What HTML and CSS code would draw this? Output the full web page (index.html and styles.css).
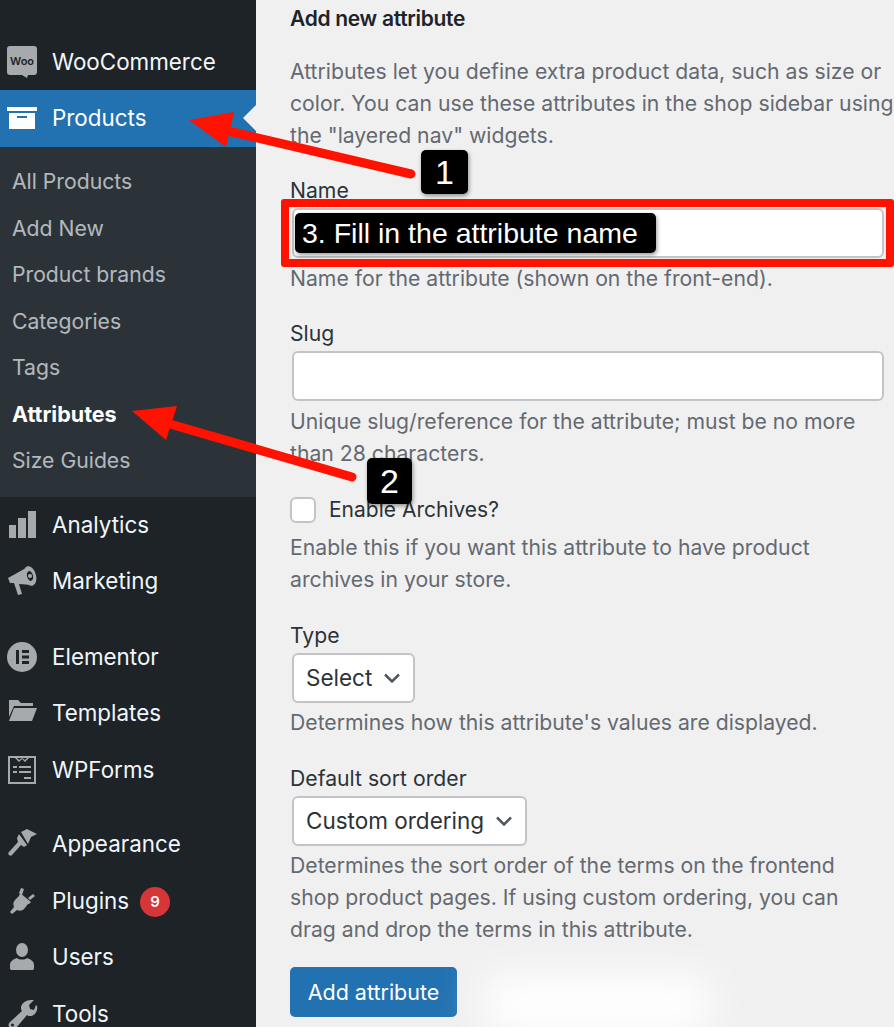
FILE: index.html
```html
<!DOCTYPE html>
<html lang="en">

<head>
    <meta charset="UTF-8">
    <meta name="viewport" content="width=device-width, initial-scale=1.0">
    <title>Add new attribute</title>
    <link rel="stylesheet" href="styles.css">
</head>

<body>
    <aside class="sidebar">
        <ul class="menu">
            <li class="menu-item">
                <svg class="icon" viewBox="0 0 32 32"><path d="M4 0h24a3 3 0 0 1 3 3v23a3 3 0 0 1-3 3h-6l-1 3-5-3H4a3 3 0 0 1-3-3V3a3 3 0 0 1 3-3z"/><text x="16" y="19" class="woo-text" text-anchor="middle">Woo</text></svg>
                <span>WooCommerce</span>
            </li>
            <li class="menu-item active">
                <svg class="icon" viewBox="0 0 32 32"><rect x="1" y="5" width="30" height="4"/><path d="M3 11h26v16H3z"/><rect class="slit" x="11" y="14" width="10" height="2"/></svg>
                <span>Products</span>
            </li>
        </ul>
        <ul class="submenu">
            <li>All Products</li>
            <li>Add New</li>
            <li>Product brands</li>
            <li>Categories</li>
            <li>Tags</li>
            <li class="current">Attributes</li>
            <li>Size Guides</li>
        </ul>
        <ul class="menu">
            <li class="menu-item">
                <svg class="icon" viewBox="0 0 32 32"><rect x="3" y="16" width="7" height="13"/><rect x="12" y="9" width="8" height="20"/><rect x="22" y="2" width="8" height="27"/></svg>
                <span>Analytics</span>
            </li>
            <li class="menu-item">
                <svg class="icon" viewBox="0 0 32 32"><path d="M2 13L20 3l6 17-13-1 3 10-4 1-4-12H4z"/><ellipse cx="24" cy="11" rx="6" ry="10" transform="rotate(-15 24 11)"/><ellipse class="dark" cx="24" cy="11" rx="3" ry="5" transform="rotate(-15 24 11)"/><circle cx="24" cy="11" r="2"/></svg>
                <span>Marketing</span>
            </li>
        </ul>
        <ul class="menu group">
            <li class="menu-item">
                <svg class="icon" viewBox="0 0 32 32"><circle cx="16" cy="16" r="15"/><rect class="dark" x="10" y="9" width="3" height="14"/><rect class="dark" x="16" y="9" width="7" height="3"/><rect class="dark" x="16" y="14.5" width="7" height="3"/><rect class="dark" x="16" y="20" width="7" height="3"/></svg>
                <span>Elementor</span>
            </li>
            <li class="menu-item">
                <svg class="icon" viewBox="0 0 32 32"><path d="M3 3h9l3 3h12v3H8L3 20z"/><path d="M8 11h23l-5 13H3z"/></svg>
                <span>Templates</span>
            </li>
            <li class="menu-item">
                <svg class="icon" viewBox="0 0 32 32"><path fill-rule="evenodd" d="M2 2h28v28H2zM4 4v24h24V4z"/><path d="M9 4l4 4 3-3 3 3 4-4h-2l-2 2-3-2-3 2-2-2z"/><rect x="7" y="12" width="4" height="2"/><rect x="13" y="12" width="12" height="2"/><rect x="7" y="17" width="4" height="2"/><rect x="13" y="17" width="12" height="2"/><rect x="18" y="23" width="7" height="2"/></svg>
                <span>WPForms</span>
            </li>
        </ul>
        <ul class="menu group">
            <li class="menu-item">
                <svg class="icon" viewBox="0 0 32 32"><path d="M15 4l6-3 10 5-6 3-3 7z"/><path d="M13 6l8 11-3 2-3-2-9 10c-2 2-5-1-3-3l9-10-1-4z"/></svg>
                <span>Appearance</span>
            </li>
            <li class="menu-item">
                <svg class="icon" viewBox="0 0 32 32"><path d="M14 8l11 9-2 2-1 0-4 5c-2 2-5 2-7 1l-5 4-2-2 4-5c-1-2-1-5 1-7l4-4z"/><path d="M15 3l3 1-2 6-3-2z"/><path d="M27 9l2 2-5 4-2-2z"/></svg>
                <span>Plugins</span>
                <span class="count">9</span>
            </li>
            <li class="menu-item">
                <svg class="icon" viewBox="0 0 32 32"><ellipse cx="16" cy="9" rx="6" ry="7"/><path d="M4 24c0-4 4-6 7-7 2 2 8 2 10 0 3 1 7 3 7 7v3c0 2-1 2-3 2H7c-2 0-3 0-3-2z"/></svg>
                <span>Users</span>
            </li>
            <li class="menu-item">
                <svg class="icon" viewBox="0 0 32 32"><path d="M28 2l-5 5 1 4 4 1 2-5 0 0 1 1c1 5-2 9-6 10-2 0-3 0-4-1L10 30c-2 2-4 2-6 0s-2-4 0-6l12-11c-1-1-1-3-1-4 1-4 5-7 10-7z"/><circle class="dark" cx="6.500" cy="27" r="1.500"/></svg>
                <span>Tools</span>
            </li>
        </ul>
    </aside>

    <main class="content">
        <h2 class="title">Add new attribute</h2>
        <p class="intro">Attributes let you define extra product data, such as size or color. You can use these attributes in the shop sidebar using the "layered nav" widgets.</p>

        <div class="field field-name">
            <label for="attr-name">Name</label>
            <div class="name-wrap">
                <input type="text" id="attr-name">
                <div class="red-box"></div>
                <div class="callout">3. Fill in the attribute name</div>
            </div>
            <p class="desc">Name for the attribute (shown on the front-end).</p>
        </div>

        <div class="field">
            <label for="attr-slug">Slug</label>
            <input type="text" id="attr-slug">
            <p class="desc">Unique slug/reference for the attribute; must be no more than 28 characters.</p>
        </div>

        <div class="field">
            <div class="check-row">
                <span class="checkbox"></span>
                <span>Enable Archives?</span>
            </div>
            <p class="desc">Enable this if you want this attribute to have product archives in your store.</p>
        </div>

        <div class="field">
            <label>Type</label>
            <div class="select select-type">
                <span>Select</span>
                <svg class="chevron" viewBox="0 0 18 10"><path d="M2 1.500l7 7 7-7"/></svg>
            </div>
            <p class="desc">Determines how this attribute's values are displayed.</p>
        </div>

        <div class="field">
            <label>Default sort order</label>
            <div class="select select-order">
                <span>Custom ordering</span>
                <svg class="chevron" viewBox="0 0 18 10"><path d="M2 1.500l7 7 7-7"/></svg>
            </div>
            <p class="desc">Determines the sort order of the terms on the frontend shop product pages. If using custom ordering, you can drag and drop the terms in this attribute.</p>
        </div>

        <button class="submit" type="button">Add attribute</button>
    </main>

    <!-- annotations drawn over the screenshot -->
    <div class="smudge"></div>
    <svg class="arrows" viewBox="0 0 894 1027">
        <path class="shaft" d="M228 131L411 174"/>
        <path class="head" d="M189 120L234 112L226 147Z"/>
        <path class="shaft" d="M170 424L352 477"/>
        <path class="head" d="M132 411L177 406L166 440Z"/>
    </svg>
    <div class="step step-one">1</div>
    <div class="step step-two">2</div>
</body>

</html>
```

FILE: styles.css
```css
* {
    box-sizing: border-box;
}

body {
    font-family: Inter, "Liberation Sans", sans-serif;
    background-color: #f0f0f1;
    color: #2c3338;
    display: flex;
    width: 894px;
    height: 1027px;
    margin: 0;
    overflow: hidden;
    position: relative;
    font-size: 21.2px;
    line-height: 32px;
}

ul {
    list-style: none;
    margin: 0;
    padding: 0;
}

/* sidebar */
.sidebar {
    width: 256px;
    flex-shrink: 0;
    height: 1027px;
    padding-top: 33.5px;
    background-color: #1d2327;
    overflow: hidden;
}

.menu.group {
    margin-top: 19px;
}

.menu.group + .menu.group {
    margin-top: 18px;
}

.menu-item {
    display: flex;
    align-items: center;
    height: 56.5px;
    padding-left: 6px;
    color: #f0f6fc;
    font-size: 22.4px;
    position: relative;
}

.menu-item.active {
    background-color: #2271b1;
    color: #fff;
}

.menu-item.active::after {
    content: "";
    position: absolute;
    right: 0;
    top: 50%;
    margin-top: -13px;
    border: 13px solid transparent;
    border-right-color: #f0f0f1;
    border-left-width: 0;
}

.icon {
    width: 32px;
    height: 32px;
    margin-right: 14px;
    flex-shrink: 0;
    fill: #a7aaad;
}

.menu-item.active .icon {
    fill: #fff;
}

.icon .slit {
    fill: #2271b1;
}

.icon .dark {
    fill: #1d2327;
}

.woo-text {
    fill: #1d2327;
    font-size: 11px;
    font-weight: 600;
}

.count {
    width: 30px;
    height: 30px;
    margin: 3px 0 0 11px;
    border-radius: 50%;
    background-color: #d63638;
    color: #fff;
    font-size: 15px;
    font-weight: 600;
    line-height: 30px;
    text-align: center;
}

.submenu {
    background-color: #2c3338;
    padding: 11.5px 0 13px;
}

.submenu li {
    height: 46.5px;
    line-height: 46.5px;
    padding-left: 12px;
    color: rgba(240, 246, 252, 0.7);
    font-size: 21.2px;
}

.submenu li.current {
    color: #fff;
    font-weight: 700;
    font-size: 21.5px;
}

/* form column */
.content {
    flex: 1;
    min-width: 0;
    padding: 3px 0 0 34px;
}

.title {
    margin: 0 0 20px;
    font-size: 21px;
    letter-spacing: -0.3px;
    line-height: 32px;
    font-weight: 600;
    color: #1d2327;
}

.intro {
    margin: 0 0 23px;
    color: #646970;
}

.field {
    margin-bottom: 24px;
}

.field-name {
    margin-bottom: 23px;
}

.field label {
    display: block;
    margin-bottom: 2px;
    color: #2c3338;
}

.field input {
    display: block;
    width: 592px;
    height: 50px;
    margin-left: 2px;
    border: 2px solid #c3c4c7;
    border-radius: 6px;
    background-color: #fff;
}

.desc {
    max-width: 594px;
    margin: 4px 0 0;
    color: #646970;
}

.select + .desc {
    margin-top: 3px;
}

.name-wrap {
    position: relative;
}

.red-box {
    position: absolute;
    left: -9px;
    right: 0;
    top: -9px;
    bottom: -9px;
    border: 8px solid #ff1200;
    border-radius: 3px;
}

.callout {
    position: absolute;
    left: 5px;
    top: 5px;
    width: 361px;
    height: 40px;
    padding-left: 7px;
    background-color: #000;
    border-radius: 5px;
    box-shadow: 1px 2px 4px rgba(0, 0, 0, 0.4);
    color: #fff;
    font-family: "Liberation Sans", Arial, sans-serif;
    font-size: 28.5px;
    line-height: 40px;
}

.check-row {
    display: flex;
    align-items: center;
    gap: 13px;
    margin-top: 25px;
    font-size: 21px;
}

.checkbox {
    width: 26px;
    height: 26px;
    border: 2px solid #c3c4c7;
    border-radius: 6px;
    background-color: #fff;
}

.check-row + .desc {
    margin-top: 5px;
}

.select {
    display: flex;
    align-items: center;
    justify-content: space-between;
    height: 50px;
    margin-left: 2px;
    padding: 0 12px;
    border: 2px solid #c3c4c7;
    border-radius: 6px;
    background-color: #fff;
    font-size: 22.5px;
}

.select-type {
    width: 123px;
}

.select-order {
    width: 235px;
}

.chevron {
    width: 18px;
    height: 10px;
    fill: none;
    stroke: #50575e;
    stroke-width: 2.5;
}

.submit {
    display: block;
    width: 167px;
    height: 50px;
    margin-top: -2px;
    padding: 0;
    border: none;
    border-radius: 5px;
    background-color: #2271b1;
    color: #fff;
    font-family: inherit;
    font-size: 21.5px;
}

/* annotations */
.smudge {
    position: absolute;
    left: 485px;
    top: 975px;
    width: 225px;
    height: 60px;
    background-color: #fff;
    filter: blur(20px);
}

.arrows {
    position: absolute;
    left: 0;
    top: 0;
    width: 894px;
    height: 1027px;
}

.shaft {
    fill: none;
    stroke: #ff1200;
    stroke-width: 9;
    stroke-linecap: round;
}

.head {
    fill: #ff1200;
}

.step {
    position: absolute;
    background-color: #000;
    border-radius: 5px;
    box-shadow: 1px 2px 4px rgba(0, 0, 0, 0.4);
    color: #fff;
    font-family: "Liberation Sans", Arial, sans-serif;
    font-size: 34px;
    text-align: center;
}

.step-one {
    left: 421px;
    top: 150px;
    width: 47px;
    height: 44px;
    line-height: 44px;
}

.step-two {
    left: 367px;
    top: 458px;
    width: 45px;
    height: 46px;
    line-height: 46px;
}
```
